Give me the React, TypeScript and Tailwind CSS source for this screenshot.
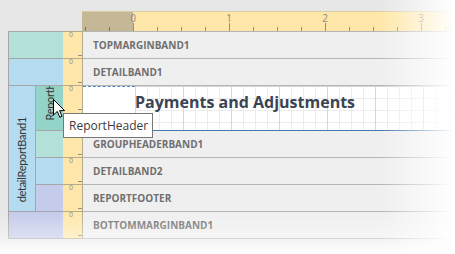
const rows = [
  { h: 'h-[27px]', label: 'TOPMARGINBAND1' },
  { h: 'h-[27px]', label: 'DETAILBAND1' },
  { h: 'h-[45px]', label: '' },
  { h: 'h-[27px]', label: 'GROUPHEADERBAND1' },
  { h: 'h-[27px]', label: 'DETAILBAND2' },
  { h: 'h-[27px]', label: 'REPORTFOOTER' },
  { h: 'h-[27px]', label: 'BOTTOMMARGINBAND1' },
]

function TopRuler() {
  const ticks: number[] = []
  for (let x = 3; x < 373; x += 24) ticks.push(x)
  const labels = [0, 1, 2, 3]
  return (
    <svg width="373" height="20" className="block">
      <rect x="0" y="0" width="51" height="20" fill="#c5b897" />
      <rect x="51" y="0" width="322" height="20" fill="#fee7a8" />
      <line x1="0" y1="0.5" x2="373" y2="0.5" stroke="#d8cfa8" />
      {ticks.map((x) => {
        const major = (x - 51) % 96 === 0
        return (
          <line
            key={x}
            x1={x + 0.5}
            y1={major ? 12 : 16}
            x2={x + 0.5}
            y2={20}
            stroke={x < 51 ? '#7d7258' : '#8f8f8f'}
          />
        )
      })}
      {labels.map((n) => (
        <text
          key={n}
          x={51 + n * 96}
          y={11}
          textAnchor="middle"
          fontSize="10"
          fill="#8a8a8a"
          fontFamily="'Open Sans', sans-serif"
        >
          {n}
        </text>
      ))}
    </svg>
  )
}

function RulerCell({ h, tall }: { h: string; tall?: boolean }) {
  return (
    <div className={`${h} border-b border-[#b3ab8c] bg-[#fee7a8]`}>
      <svg width="19" height={tall ? 44 : 26} className="block">
        <text x="6" y="5" fontSize="7" fill="#8c8c8c" fontFamily="'Open Sans', sans-serif">
          0
        </text>
        <line x1="15" y1="23.5" x2="19" y2="23.5" stroke="#8f8f8f" />
      </svg>
    </div>
  )
}

function Tree() {
  return (
    <div className="grid w-[55px] shrink-0 grid-cols-[26px_27px] grid-rows-[26px_26px_44px_26px_26px_26px_26px] gap-px border border-[#a6a6a6] bg-[#a6a6a6] font-['Lato',sans-serif]">
      <div className="col-span-2 bg-[#b3e1da]" />
      <div className="col-span-2 bg-[#b4dbf0]" />
      <div className="row-span-4 flex flex-col items-center justify-end overflow-hidden bg-[#b4dbf0] pb-[9px]">
        <span className="rotate-180 whitespace-nowrap text-[11px] leading-[26px] tracking-[-0.3px] text-[#333] [writing-mode:vertical-rl]">
          detailReportBand1
        </span>
      </div>
      <div className="flex flex-col items-center justify-end overflow-hidden bg-[#94d3c7] pb-[9px]">
        <span className="rotate-180 whitespace-nowrap text-[11px] leading-[27px] tracking-[-0.3px] text-[#333] [writing-mode:vertical-rl]">
          ReportHeader
        </span>
      </div>
      <div className="bg-[#b3e1da]" />
      <div className="bg-[#b4dbf0]" />
      <div className="bg-[#c5cbea]" />
      <div className="col-span-2 bg-[#c5cbea]" />
    </div>
  )
}

function Bands() {
  return (
    <div className="min-w-0 flex-1 border-t border-[#b5b5b5]">
      {rows.map((r, i) =>
        r.label ? (
          <div
            key={i}
            className={`${r.h} flex items-center border-b border-[#b5b5b5] bg-[#efefef] pl-[10px] text-[10px] font-bold text-[#6f6f6f]`}
          >
            {r.label}
          </div>
        ) : (
          <div key={i} className={`${r.h} flex border-b border-[#4677ae] bg-white`}>
            <div className="w-[52px] shrink-0 border-t border-dashed border-[#4f86c6]" />
            <div className="flex-1 bg-[linear-gradient(to_right,#d6d6d6_1px,transparent_1px),linear-gradient(to_bottom,#d6d6d6_1px,transparent_1px),linear-gradient(to_right,#ececec_1px,transparent_1px),linear-gradient(to_bottom,#ececec_1px,transparent_1px)] bg-[length:48px_48px,48px_48px,12px_12px,12px_12px] pt-[5px]">
              <div className="whitespace-nowrap text-[16px] font-bold leading-[22px] text-[#3b4453]">
                Payments and Adjustments
              </div>
            </div>
          </div>
        ),
      )}
    </div>
  )
}

export default function App() {
  return (
    <div className="relative h-[254px] w-[455px] overflow-hidden bg-[#e7e7e7] font-['Open_Sans',sans-serif]">
      <div className="flex h-[31px] pt-[11px]">
        <div className="w-[82px] shrink-0" />
        <TopRuler />
      </div>
      <div className="flex">
        <div className="w-[8px] shrink-0" />
        <Tree />
        <div className="w-[20px] shrink-0 border-r border-t border-[#b3ab8c]">
          {rows.map((r, i) => (
            <RulerCell key={i} h={r.h} tall={i === 2} />
          ))}
        </div>
        <Bands />
      </div>

      <div className="pointer-events-none absolute right-0 top-0 h-full w-[75px] bg-linear-to-r from-white/0 to-white" />
      <div className="pointer-events-none absolute bottom-0 left-0 h-[42px] w-full bg-linear-to-b from-white/0 via-white/40 via-60% to-white" />

      <svg width="13" height="20" viewBox="0 0 13 20" className="absolute left-[53px] top-[99px]">
        <path
          d="M0.5 0.5 L0.5 16 L4.3 12.4 L6.8 18.3 L9 17.3 L6.6 11.6 L11.6 11.6 Z"
          fill="white"
          stroke="black"
          strokeWidth="1"
          strokeLinejoin="round"
        />
      </svg>

      <div className="absolute left-[63px] top-[113px] flex h-[25px] w-[90px] items-center border border-[#767676] bg-white pl-[5px] text-[12px] text-[#3c3c3c]">
        ReportHeader
      </div>
    </div>
  )
}
